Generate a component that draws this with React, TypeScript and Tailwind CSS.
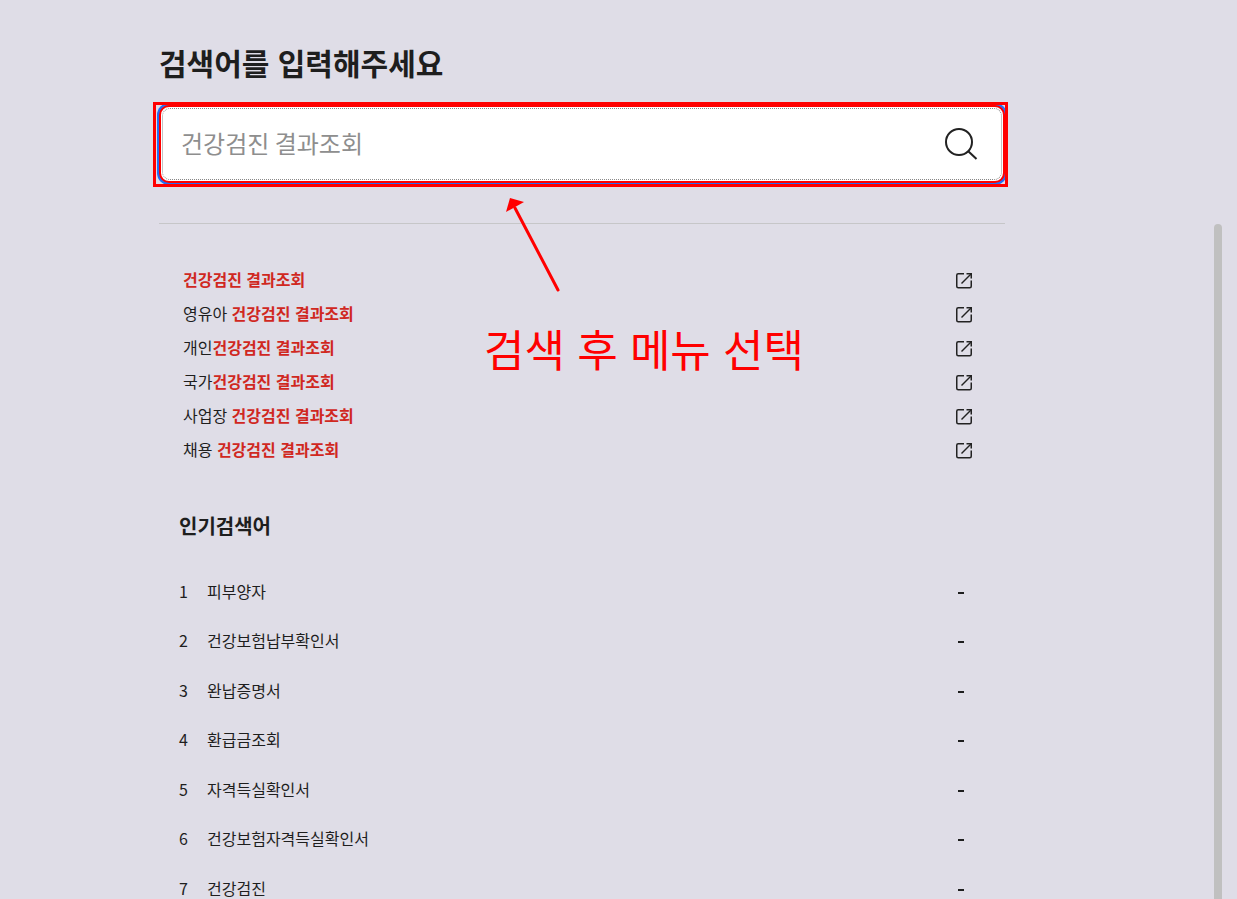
import React from 'react';

const KEYWORD = '건강검진 결과조회';

const suggestions = ['', '영유아 ', '개인', '국가', '사업장 ', '채용 '];

const popularKeywords = [
  '피부양자',
  '건강보험납부확인서',
  '완납증명서',
  '환급금조회',
  '자격득실확인서',
  '건강보험자격득실확인서',
  '건강검진',
];

const SearchIcon: React.FC = () => (
  <svg className="w-9 h-9" viewBox="0 0 36 36" fill="none" stroke="#222222" strokeWidth="2" aria-hidden="true">
    <circle cx="16" cy="16" r="13" />
    <path d="M25 25l8.5 8" />
  </svg>
);

const LinkIcon: React.FC = () => (
  <svg className="w-[18px] h-[18px]" viewBox="0 0 18 18" fill="none" stroke="#222222" strokeWidth="1.5" aria-hidden="true">
    <path d="M9 1.75H3.25A1.5 1.5 0 0 0 1.75 3.25v11A1.5 1.5 0 0 0 3.25 15.75h11.5A1.5 1.5 0 0 0 16.25 14.25V8.5" />
    <path d="M6.5 11.5L16 2" />
    <path d="M11.5 1.75h4.75V6.5" />
  </svg>
);

const SearchForm: React.FC = () => (
  <div className="relative mt-[22px]">
    <form
      className="rounded-[10px] border-2 border-[#ff0000] bg-white p-px ring-2 ring-[#256ef4]"
      onSubmit={(e) => e.preventDefault()}
    >
      <div className="flex items-center h-[72px] rounded-lg border border-dotted border-[#888888] pl-[18px] pr-[22px]">
        <input
          id="keyword"
          type="text"
          placeholder={KEYWORD}
          className="flex-1 min-w-0 h-12 pb-1 bg-transparent text-2xl text-[#222222] placeholder:text-[#8e8e8e] outline-none"
        />
        <button type="submit" aria-label="검색">
          <SearchIcon />
        </button>
      </div>
    </form>
    {/* Highlight frame */}
    <div className="absolute -top-[3px] -bottom-1 -left-1.5 -right-[3px] border-3 border-[#ff0000] pointer-events-none" />
  </div>
);

const App: React.FC = () => {
  return (
    <div className="flex h-screen overflow-hidden bg-[#dfdde7] text-[#1e1e1e] font-['Noto_Sans_CJK_KR',sans-serif]">
      <main className="relative flex-1 min-w-0 pt-[47px] pl-[159px] pr-[209px]">
        <h1 className="text-[30px] leading-9 font-bold font-['Liberation_Sans','Noto_Sans_CJK_KR',sans-serif]">
          <label htmlFor="keyword">검색어를 입력해주세요</label>
        </h1>
        <SearchForm />

        {/* Suggestions */}
        <ul className="mt-10 border-t border-[#c6c6c8] pt-10 pl-6 pr-8 font-['Liberation_Sans','Noto_Sans_CJK_KR',sans-serif]">
          {suggestions.map((prefix) => (
            <li key={prefix}>
              <a href="#" className="flex items-center justify-between h-[34px]">
                <span className="whitespace-pre">
                  {prefix}
                  <strong className="font-bold text-[#d0281f]">{KEYWORD}</strong>
                </span>
                <LinkIcon />
              </a>
            </li>
          ))}
        </ul>

        {/* Popular keywords */}
        <section className="pt-[42px] pl-5 pr-[41px]">
          <h2 className="text-xl leading-8 font-bold">인기검색어</h2>
          <ol className="mt-6">
            {popularKeywords.map((keyword, idx) => (
              <li key={keyword} className="flex items-center odd:h-[49px] even:h-[50px]">
                <span className="w-7">{idx + 1}</span>
                <a href="#">{keyword}</a>
                <span className="mt-1 ml-auto w-1.5 h-0.5 bg-[#1e1e1e]" />
              </li>
            ))}
          </ol>
        </section>

        {/* Guide arrow and note */}
        <div className="absolute top-[196px] left-[484px] text-[#ff0000] pointer-events-none">
          <svg className="ml-5 w-14 h-24" viewBox="0 0 56 96" aria-hidden="true">
            <path d="M11 12L54 94" stroke="currentColor" strokeWidth="3" strokeLinecap="round" />
            <path d="M6 2L20 6L2 16Z" fill="currentColor" />
          </svg>
          <p className="mt-8 text-[44px] leading-[56px] whitespace-nowrap font-['Liberation_Sans','Noto_Sans_CJK_KR',sans-serif]">
            검색 후 메뉴 선택
          </p>
        </div>
      </main>

      {/* Scrollbar thumb */}
      <div className="mt-56 mr-[15px] w-2 shrink-0 rounded-t-full bg-[#c0c0c0]" />
    </div>
  );
};

export default App;
